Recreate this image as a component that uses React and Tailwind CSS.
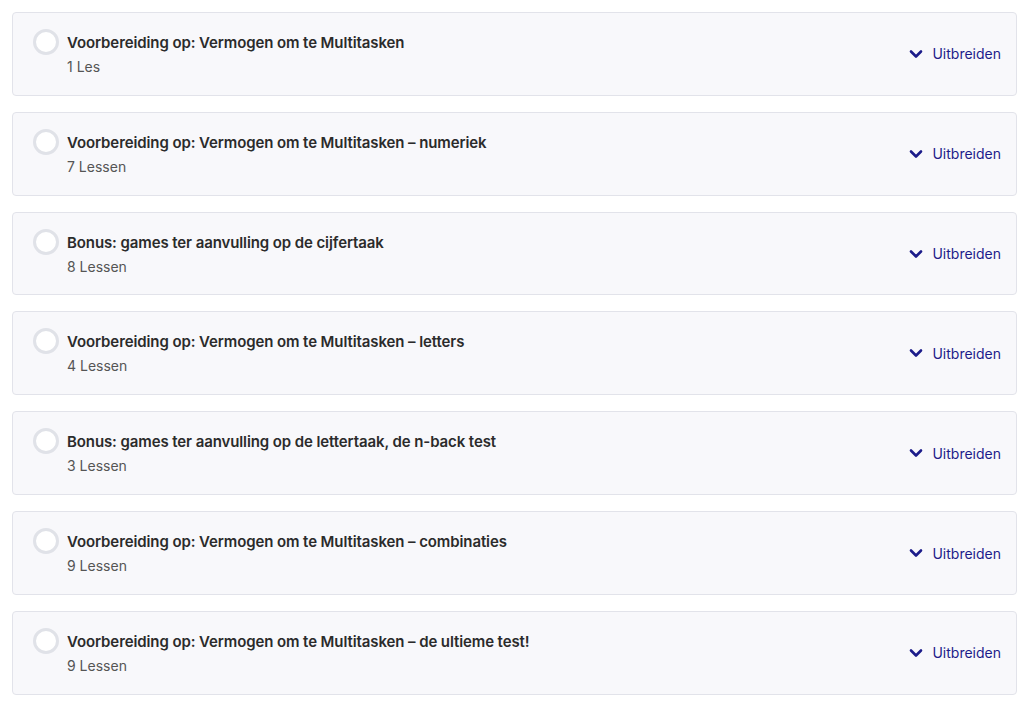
import React from "react";

const items = [
  ["Voorbereiding op: Vermogen om te Multitasken", "1 Les"],
  ["Voorbereiding op: Vermogen om te Multitasken – numeriek", "7 Lessen"],
  ["Bonus: games ter aanvulling op de cijfertaak", "8 Lessen"],
  ["Voorbereiding op: Vermogen om te Multitasken – letters", "4 Lessen"],
  ["Bonus: games ter aanvulling op de lettertaak, de n-back test", "3 Lessen"],
  ["Voorbereiding op: Vermogen om te Multitasken – combinaties", "9 Lessen"],
  ["Voorbereiding op: Vermogen om te Multitasken – de ultieme test!", "9 Lessen"],
];

function Chevron() {
  return (
    <svg width="14" height="10" viewBox="0 0 14 10" fill="none">
      <path d="M2 2.5 L7 7.5 L12 2.5" stroke="#1c1c8a" strokeWidth="2.6" strokeLinecap="round" strokeLinejoin="round" />
    </svg>
  );
}

export default function App() {
  return (
    <div className="bg-white w-[1035px] min-h-[714px] pt-[12px] pl-[12px]" style={{ fontFamily: "Inter, 'Noto Sans', sans-serif" }}>
      <div className="flex flex-col gap-[16px] w-[1005px]">
        {items.map(([t, s], i) => (
          <div key={i} className="flex items-center justify-between h-[83.83px] border border-[#e2e3ea] rounded-[4px] bg-[#f8f8fb] pl-[20px] pr-[15px]">
            <div className="flex items-start gap-[8px] self-start pt-[16px]">
              <div className="w-[26px] h-[26px] rounded-full border-[3px] border-[#e0e2e8] bg-white shrink-0"></div>
              <div className="flex flex-col pt-[2px]">
                <div className="text-[15px] leading-[24px] font-semibold text-[#2b2b2b] tracking-[-0.1px]">{t}</div>
                <div className="text-[14px] leading-[20px] text-[#555555] mt-[2px]">{s}</div>
              </div>
            </div>
            <div className="flex items-center gap-[9px] text-[14px] text-[#1c1c8a]">
              <Chevron />
              <span>Uitbreiden</span>
            </div>
          </div>
        ))}
      </div>
    </div>
  );
}
